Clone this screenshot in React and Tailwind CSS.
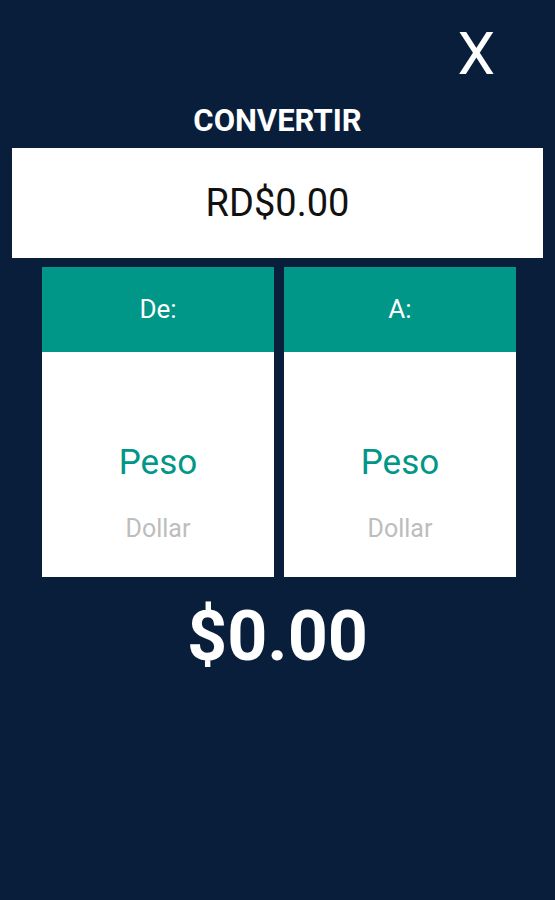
import React from "react";

const CurrencyCard = ({ label }) => {
	return (
		<div className="flex flex-col w-[232px] h-[310px] bg-white">
			<div className="h-[85px] bg-[#009688] flex items-center justify-center text-white text-[26px]">
				{label}
			</div>
			<div className="flex-1 flex flex-col items-center pt-[93px]">
				<div className="text-[35px] leading-none text-[#009688]">Peso</div>
				<div className="mt-[36px] text-[25px] leading-none text-[#bdbdbd]">Dollar</div>
			</div>
		</div>
	);
};

const App = () => {
	return (
		<div className="w-[555px] h-[900px] bg-[#081e3a] font-['Roboto',sans-serif] flex flex-col">
			<div className="flex justify-end pr-[60px] pt-[24px]">
				<button className="text-white text-[60px] leading-none">X</button>
			</div>
			<h1 className="mt-[21px] text-center text-white font-bold text-[31px] leading-none">
				CONVERTIR
			</h1>
			<div className="mt-[12px] mx-[12px] h-[110px] bg-white flex items-center justify-center text-[38px] text-[#111]">
				RD$0.00
			</div>
			<div className="mt-[9px] ml-[42px] flex gap-[10px]">
				<CurrencyCard label="De:" />
				<CurrencyCard label="A:" />
			</div>
			<div className="mt-[24px] text-center text-white font-bold text-[70px] leading-none">
				$0.00
			</div>
		</div>
	);
};

export default App;
